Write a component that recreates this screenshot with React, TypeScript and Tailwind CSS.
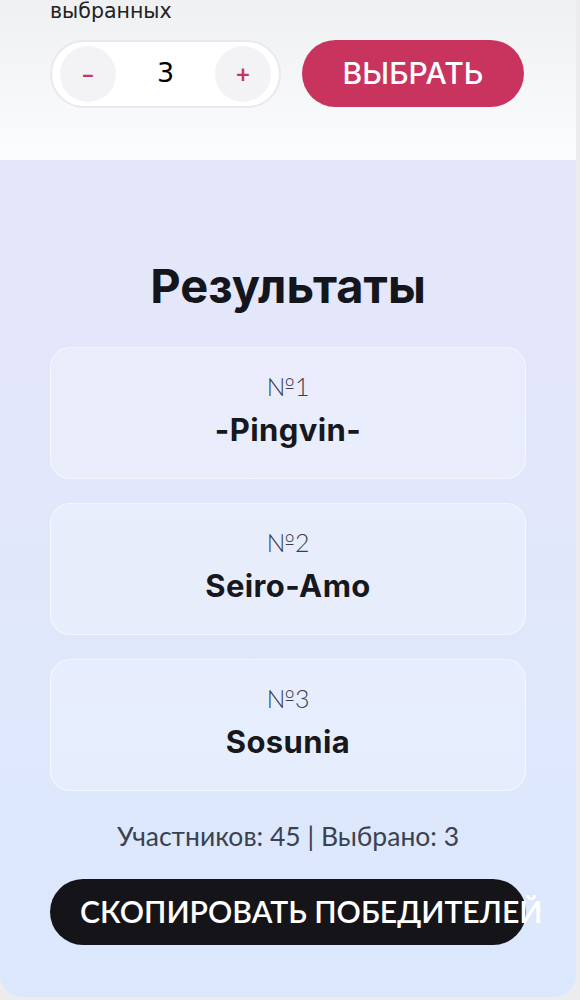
import { useState } from "react";

const winners = ["-Pingvin-", "Seiro-Amo", "Sosunia"];

function Counter({ value, onChange }: { value: number; onChange: (v: number) => void }) {
  return (
    <div className="flex h-[68px] w-[231px] items-center justify-between rounded-full border-2 border-[#e8e8ee] bg-white px-[8px]">
      <button
        onClick={() => onChange(Math.max(1, value - 1))}
        className="grid h-[56px] w-[56px] place-items-center rounded-full bg-[#f3f3f6] text-[24px] font-bold text-[#c8365f]"
      >
        –
      </button>
      <span className="text-[27px] text-black [font-family:'DejaVu_Sans',sans-serif]">{value}</span>
      <button
        onClick={() => onChange(value + 1)}
        className="grid h-[56px] w-[56px] place-items-center rounded-full bg-[#f3f3f6] text-[24px] font-bold text-[#c8365f]"
      >
        +
      </button>
    </div>
  );
}

export default function App() {
  const [count, setCount] = useState(3);

  return (
    <div className="min-h-screen bg-[#ececee] [font-family:Lato,'Noto_Sans',sans-serif]">
      <div className="w-[576px]">
        <section className="overflow-hidden bg-gradient-to-b from-[#eff0f2] to-[#fbfcfd] px-[50px] pb-[52px]">
          <p className="mt-px text-[20.5px] leading-none text-[#222] [font-family:'DejaVu_Sans',sans-serif]">
            выбранных
          </p>
          <div className="mt-[18px] flex items-center gap-[21px]">
            <Counter value={count} onChange={setCount} />
            <button className="h-[67px] w-[222px] rounded-full bg-[#c9345f] text-[30px] font-medium text-white [font-family:Inter,sans-serif]">
              ВЫБРАТЬ
            </button>
          </div>
        </section>

        <section className="flex flex-col rounded-b-[22px] bg-gradient-to-b from-[#e6e6fa] to-[#dbe8fc] px-[50px] pb-[52px] pt-[98px]">
          <h2 className="text-center text-[47px] font-bold leading-[56px] text-[#15151c] [font-family:Inter,sans-serif]">
            Результаты
          </h2>

          <div className="mt-[33px] flex flex-col gap-[24px]">
            {winners.map((name, i) => (
              <div
                key={name}
                className="flex h-[132px] flex-col items-center justify-center rounded-[20px] border-[1.5px] border-white/50 bg-white/25 pb-[8px]"
              >
                <span className="text-[25px] font-light leading-[32px] text-[#3a3f4b]">№{i + 1}</span>
                <span className="mt-[10px] text-[31px] font-bold leading-[36px] tracking-[0.4px] text-[#16181d] [font-family:Inter,sans-serif]">
                  {name}
                </span>
              </div>
            ))}
          </div>

          <p className="mt-[30px] text-center text-[26.5px] leading-[30px] text-[#3a4252]">
            Участников: 45 | Выбрано: {count}
          </p>

          <button className="mt-[28px] h-[66px] w-full whitespace-nowrap rounded-full bg-[#151419] pl-[30px] text-left text-[30.2px] font-semibold text-white">
            СКОПИРОВАТЬ ПОБЕДИТЕЛЕЙ
          </button>
        </section>
      </div>
    </div>
  );
}
